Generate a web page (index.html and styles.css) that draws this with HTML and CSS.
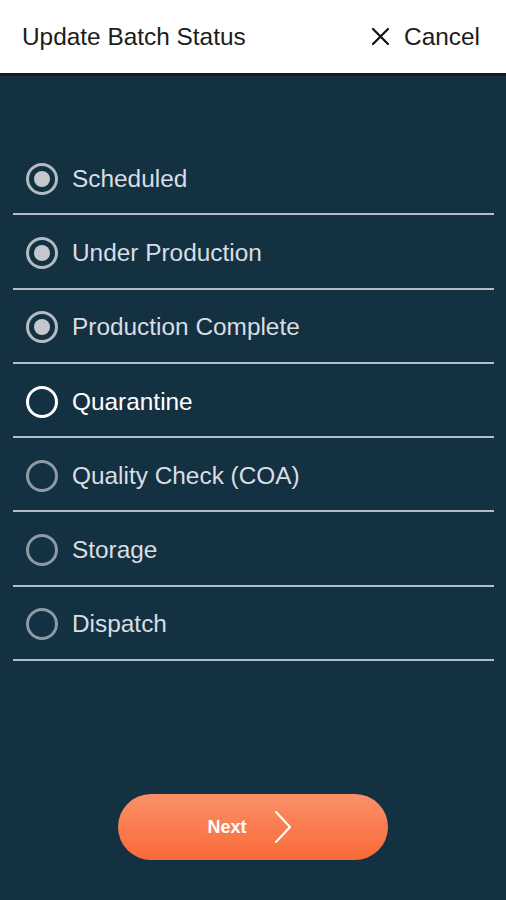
FILE: index.html
```html
<!DOCTYPE html>
<html lang="en">
<head>
    <meta charset="UTF-8">
    <title>Update Batch Status</title>
    <link rel="stylesheet" href="styles.css">
</head>
<body>
    <header class="top-bar">
        <h1 class="title">Update Batch Status</h1>
        <button class="cancel" type="button">
            <svg class="cancel-icon" width="19" height="19" viewBox="0 0 19 19">
                <path d="M2 2 L17 17 M17 2 L2 17" stroke="#111" stroke-width="2.2" stroke-linecap="round" fill="none"/>
            </svg>
            <span>Cancel</span>
        </button>
    </header>

    <main class="status-panel">
        <ul class="status-list">
            <li class="status done"><span class="radio"></span>Scheduled</li>
            <li class="status done"><span class="radio"></span>Under Production</li>
            <li class="status done"><span class="radio"></span>Production Complete</li>
            <li class="status current"><span class="radio"></span>Quarantine</li>
            <li class="status"><span class="radio"></span>Quality Check (COA)</li>
            <li class="status"><span class="radio"></span>Storage</li>
            <li class="status"><span class="radio"></span>Dispatch</li>
        </ul>

        <div class="actions">
            <button class="next" type="button">
                <span>Next</span>
                <svg class="next-icon" width="20" height="34" viewBox="0 0 20 34">
                    <path d="M3 2 L17 17 L3 32" stroke="#fff" stroke-width="2" stroke-linecap="round" stroke-linejoin="round" fill="none"/>
                </svg>
            </button>
        </div>
    </main>
</body>
</html>
```

FILE: styles.css
```css
html, body {
    margin: 0;
    height: 100%;
}
body {
    font-family: "Liberation Sans", Arial, sans-serif;
    background: #143142;
    display: flex;
    flex-direction: column;
}
.top-bar {
    background: #fff;
    height: 73px;
    border-bottom: 3px solid #141a33;
    display: flex;
    align-items: center;
    justify-content: space-between;
    padding: 0 26px 0 22px;
    box-sizing: content-box;
}
.title {
    margin: 0;
    font-size: 24.4px;
    font-weight: normal;
    color: #1c1c1c;
}
.cancel {
    display: flex;
    align-items: center;
    gap: 14px;
    border: 0;
    background: none;
    padding: 0;
    font: inherit;
    font-size: 24.4px;
    color: #1c1c1c;
}
.status-panel {
    flex: 1;
    display: flex;
    flex-direction: column;
    padding: 65px 12px 0 13px;
}
.status-list {
    list-style: none;
    margin: 0;
    padding: 0;
}
.status {
    display: flex;
    align-items: center;
    gap: 14px;
    height: 74.3px;
    padding: 3px 0 0 13px;
    box-sizing: border-box;
    border-bottom: 2px solid #b4bcc4;
    font-size: 24.4px;
    color: #d8dee3;
}
.radio {
    width: 26px;
    height: 26px;
    border: 3px solid #8d9aa4;
    border-radius: 50%;
    box-sizing: content-box;
    display: flex;
    align-items: center;
    justify-content: center;
}
.done .radio {
    border-color: #b3bbc2;
}
.done .radio::after {
    content: "";
    width: 16px;
    height: 16px;
    border-radius: 50%;
    background: #c4c8cc;
}
.current {
    color: #fff;
}
.current .radio {
    border-color: #fff;
}
.actions {
    margin-top: auto;
    display: flex;
    justify-content: center;
    padding-bottom: 40px;
    padding-right: 1px;
}
.next {
    width: 270px;
    height: 66px;
    border: 0;
    border-radius: 33px;
    background: linear-gradient(#fb9069, #f96a38);
    display: flex;
    align-items: center;
    justify-content: center;
    gap: 26px;
    padding: 0 6px 0 0;
    color: #fff;
    font: inherit;
    font-size: 18px;
    font-weight: bold;
}
```
